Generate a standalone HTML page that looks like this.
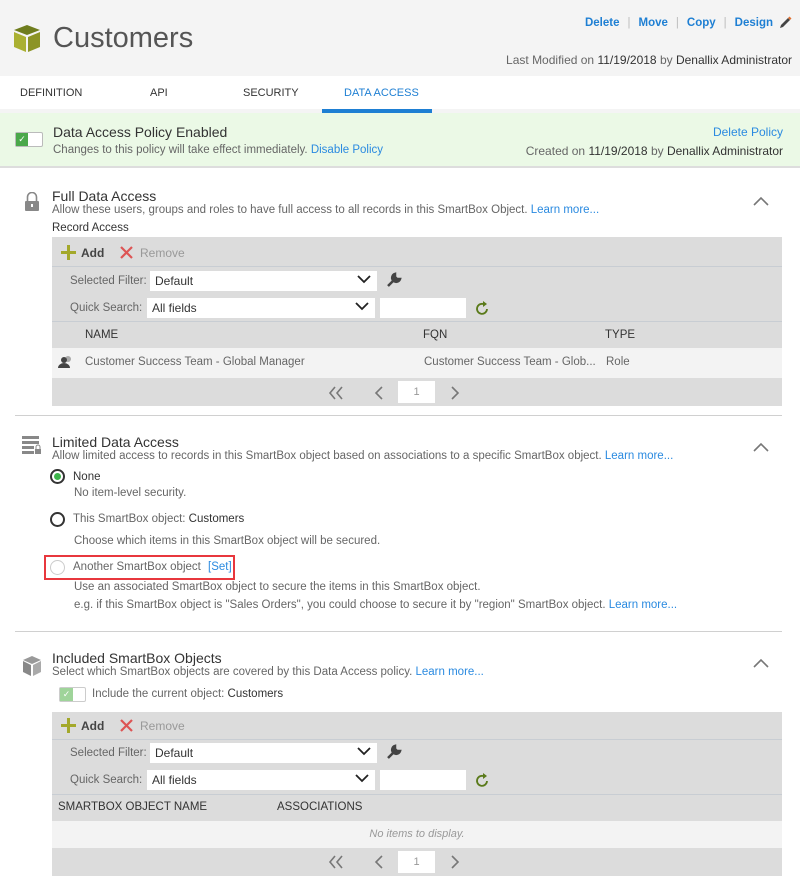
<!DOCTYPE html>
<html><head><style>
*{margin:0;padding:0;box-sizing:border-box}
body{width:800px;height:884px;background:#fff;font-family:"Liberation Sans",Arial,sans-serif;color:#333;position:relative;overflow:hidden;font-size:12px}
.a{position:absolute;white-space:nowrap}
.blue{color:#2a8ae0}
.g{color:#666}
.grid{position:absolute;left:52px;width:730px;background:#dcdcdc}
.inp{position:absolute;background:#fff;height:20px;font-size:12px;padding:3px 5px;color:#333}
.chev{position:absolute;right:6px;top:3px}
.sep{position:absolute;left:15px;width:767px;height:1px;background:#d0d0d0}
.radio{position:absolute;width:15px;height:15px;border-radius:50%;border:2px solid #333;background:#fff}
.pipe{color:#bbb;font-weight:normal;margin:0 8px}
</style></head><body>
<div class="a" style="left:0;top:0;width:800px;height:76px;background:#f4f4f4"></div>
<svg class="a" style="left:13px;top:24px" width="28" height="29" viewBox="0 0 28 29"><polygon points="14,1 27,6 14,11 1,6" fill="#6f7d1e"/><polygon points="1,8 13,13 13,28 1,23" fill="#aab032"/><polygon points="15,13 27,8 27,23 15,28" fill="#8c9426"/></svg>
<div class="a" style="left:53px;top:22px;font-size:29px;color:#555">Customers</div>
<div class="a" style="right:27px;top:17px;font-size:11.5px;font-weight:bold;color:#1e7fd3">Delete<span class="pipe">|</span>Move<span class="pipe">|</span>Copy<span class="pipe">|</span>Design</div>
<svg class="a" style="left:778px;top:16px" width="14" height="14" viewBox="0 0 14 14"><path d="M2 12 L3 9 L10 2 L12 4 L5 11 Z" fill="#444"/><path d="M10 2 L11.5 0.5 L13.5 2.5 L12 4Z" fill="#e07030"/></svg>
<div class="a g" style="right:8px;top:53px;font-size:12px">Last Modified on <span style="color:#333">11/19/2018</span> by <span style="color:#333">Denallix Administrator</span></div>
<div class="a" style="left:0;top:76px;width:800px;height:33px;background:#fff"></div>
<div class="a" style="left:0;top:109px;width:800px;height:4px;background:#f4f4f4"></div>
<div class="a" style="left:20px;top:87px;font-size:11px;color:#333">DEFINITION</div>
<div class="a" style="left:150px;top:87px;font-size:11px;color:#333">API</div>
<div class="a" style="left:243px;top:87px;font-size:11px;color:#333">SECURITY</div>
<div class="a" style="left:344px;top:87px;font-size:11px;color:#1e7fd3">DATA ACCESS</div>
<div class="a" style="left:322px;top:109px;width:110px;height:4px;background:#1e7fd3"></div>
<div class="a" style="left:0;top:113px;width:800px;height:55px;background:#ebf9e6;border-bottom:2px solid #ddd"></div>
<div class="a" style="left:15px;top:132px;width:28px;height:15px;border:1px solid #bbb;border-radius:2px;background:#fff"><div style="width:12px;height:13px;background:#4aa84a;color:#fff;font-size:9px;text-align:center;line-height:13px">✓</div></div>
<div class="a" style="left:53px;top:124px;font-size:14px;color:#333">Data Access Policy Enabled</div>
<div class="a g" style="left:53px;top:144px;font-size:11.5px">Changes to this policy will take effect immediately. <span class="blue">Disable Policy</span></div>
<div class="a blue" style="right:17px;top:125px;font-size:12px">Delete Policy</div>
<div class="a g" style="right:17px;top:144px;font-size:12px">Created on <span style="color:#333">11/19/2018</span> by <span style="color:#333">Denallix Administrator</span></div>

<!-- Full data access -->
<svg class="a" style="left:24px;top:192px" width="16" height="20" viewBox="0 0 16 20"><path d="M3.5 9 V5 a4.5 4.5 0 0 1 9 0 V9" fill="none" stroke="#888" stroke-width="1.6"/><rect x="1" y="9" width="14" height="10" rx="1" fill="#888"/><rect x="7" y="12" width="2" height="3" fill="#fff"/></svg>
<div class="a" style="left:52px;top:188px;font-size:14px">Full Data Access</div>
<div class="a g" style="left:52px;top:204px;font-size:11.5px">Allow these users, groups and roles to have full access to all records in this SmartBox Object. <span class="blue">Learn more...</span></div>
<svg class="a" style="left:753px;top:196px" width="16" height="10"><path d="M1 9 L8 2 L15 9" fill="none" stroke="#777" stroke-width="1.6"/></svg>
<div class="a" style="left:52px;top:222px;font-size:11.5px">Record Access</div>

<div class="grid" style="top:237px;height:169px">
 <div class="a" style="left:0;top:0;width:730px;height:30px;border-bottom:1px solid #c8cdd3"></div>
 <svg class="a" style="left:9px;top:8px" width="15" height="15"><rect x="6" y="0" width="3" height="15" fill="#a3a82a"/><rect x="0" y="6" width="15" height="3" fill="#a3a82a"/></svg>
 <div class="a" style="left:29px;top:9px;font-size:12px;font-weight:bold;color:#444">Add</div>
 <svg class="a" style="left:68px;top:9px" width="13" height="13"><path d="M1 1 L12 12 M12 1 L1 12" stroke="#d55" stroke-width="2.2"/></svg>
 <div class="a" style="left:88px;top:9px;font-size:12px;color:#999">Remove</div>
 <div class="a g" style="left:18px;top:38px;font-size:11.5px">Selected Filter:</div>
 <div class="inp" style="left:98px;top:34px;width:227px">Default<svg class="chev" width="14" height="10"><path d="M1 2 L7 8 L13 2" fill="none" stroke="#222" stroke-width="1.8"/></svg></div>
 <svg class="a" style="left:334px;top:35px" width="16" height="16" viewBox="0 0 16 16"><path d="M2 14 L8 8 M9 2 a4 4 0 1 0 5 5 L11 7 L9 5 Z" fill="#444" stroke="#444" stroke-width="2.5"/></svg>
 <div class="a g" style="left:18px;top:65px;font-size:11.5px">Quick Search:</div>
 <div class="inp" style="left:95px;top:61px;width:228px">All fields<svg class="chev" width="14" height="10"><path d="M1 2 L7 8 L13 2" fill="none" stroke="#222" stroke-width="1.8"/></svg></div>
 <div class="inp" style="left:328px;top:61px;width:86px"></div>
 <svg class="a" style="left:423px;top:63px" width="15" height="16" viewBox="0 0 15 16"><path d="M12 9 A5 5 0 1 1 9.5 4.5" fill="none" stroke="#5a7a1a" stroke-width="1.8"/><path d="M8 1 L12 4 L8 7Z" fill="#5a7a1a"/></svg>
 <div class="a" style="left:0;top:84px;width:730px;height:1px;background:#c8cdd3"></div>
 <div class="a" style="left:33px;top:92px;font-size:11.5px">NAME</div>
 <div class="a" style="left:371px;top:92px;font-size:11.5px">FQN</div>
 <div class="a" style="left:553px;top:92px;font-size:11.5px">TYPE</div>
 <div class="a" style="left:0;top:111px;width:730px;height:30px;background:#f3f3f3"></div>
 <svg class="a" style="left:6px;top:118px" width="16" height="14"><circle cx="10" cy="4" r="3" fill="#aaa"/><circle cx="6" cy="5" r="3" fill="#444"/><path d="M0 13 a6 5 0 0 1 12 0Z" fill="#444"/></svg>
 <div class="a g" style="left:33px;top:119px;font-size:11.5px">Customer Success Team - Global Manager</div>
 <div class="a g" style="left:372px;top:119px;font-size:11.5px">Customer Success Team - Glob...</div>
 <div class="a g" style="left:554px;top:119px;font-size:11.5px">Role</div>
 <svg class="a" style="left:276px;top:149px" width="16" height="14"><path d="M7 1 L2 7 L7 13 M14 1 L9 7 L14 13" fill="none" stroke="#777" stroke-width="1.6"/></svg>
 <svg class="a" style="left:322px;top:149px" width="10" height="14"><path d="M8 1 L2 7 L8 13" fill="none" stroke="#777" stroke-width="1.6"/></svg>
 <div class="a" style="left:346px;top:144px;width:37px;height:22px;background:#fff;color:#999;font-size:11px;text-align:center;line-height:22px">1</div>
 <svg class="a" style="left:398px;top:149px" width="10" height="14"><path d="M2 1 L8 7 L2 13" fill="none" stroke="#777" stroke-width="1.6"/></svg>
</div>
<div class="sep" style="top:415px"></div>

<!-- Limited -->
<svg class="a" style="left:22px;top:436px" width="20" height="20"><rect x="0" y="0" width="17" height="3" fill="#888"/><rect x="0" y="5" width="17" height="3" fill="#888"/><rect x="0" y="10" width="12" height="3" fill="#888"/><rect x="0" y="15" width="12" height="3" fill="#888"/><rect x="13" y="13" width="6" height="5" fill="#888"/><path d="M14 13 v-2 a2 2 0 0 1 4 0 v2" fill="none" stroke="#888"/></svg>
<div class="a" style="left:52px;top:434px;font-size:14px">Limited Data Access</div>
<div class="a g" style="left:52px;top:450px;font-size:11.5px">Allow limited access to records in this SmartBox object based on associations to a specific SmartBox object. <span class="blue">Learn more...</span></div>
<svg class="a" style="left:753px;top:442px" width="16" height="10"><path d="M1 9 L8 2 L15 9" fill="none" stroke="#777" stroke-width="1.6"/></svg>
<div class="radio" style="left:50px;top:469px"><div style="width:7px;height:7px;border-radius:50%;background:#3cb44a;margin:2px"></div></div>
<div class="a" style="left:73px;top:471px;font-size:11.5px">None</div>
<div class="a g" style="left:74px;top:487px;font-size:11.5px">No item-level security.</div>
<div class="radio" style="left:50px;top:512px"></div>
<div class="a" style="left:73px;top:513px;font-size:11.5px"><span class="g">This SmartBox object:</span> Customers</div>
<div class="a g" style="left:74px;top:535px;font-size:11.5px">Choose which items in this SmartBox object will be secured.</div>
<div class="a" style="left:44px;top:555px;width:191px;height:25px;border:2px solid #e8373d"></div>
<div class="radio" style="left:50px;top:560px;border:1px solid #ccc"></div>
<div class="a g" style="left:73px;top:561px;font-size:11.5px">Another SmartBox object <span class="blue" style="margin-left:4px">[Set]</span></div>
<div class="a g" style="left:74px;top:581px;font-size:11.5px">Use an associated SmartBox object to secure the items in this SmartBox object.</div>
<div class="a g" style="left:74px;top:599px;font-size:11.5px">e.g. if this SmartBox object is "Sales Orders", you could choose to secure it by "region" SmartBox object. <span class="blue">Learn more...</span></div>
<div class="sep" style="top:631px"></div>

<!-- Included -->
<svg class="a" style="left:22px;top:655px" width="20" height="22" viewBox="0 0 20 22"><polygon points="10,1 19,5 10,9 1,5" fill="#999"/><polygon points="1,6 9,10 9,21 1,17" fill="#888"/><polygon points="11,10 19,6 19,17 11,21" fill="#aaa"/></svg>
<div class="a" style="left:52px;top:650px;font-size:14px">Included SmartBox Objects</div>
<div class="a g" style="left:52px;top:666px;font-size:11.5px">Select which SmartBox objects are covered by this Data Access policy. <span class="blue">Learn more...</span></div>
<svg class="a" style="left:753px;top:658px" width="16" height="10"><path d="M1 9 L8 2 L15 9" fill="none" stroke="#777" stroke-width="1.6"/></svg>
<div class="a" style="left:59px;top:687px;width:27px;height:15px;border:1px solid #ccc;border-radius:2px;background:#fff"><div style="width:13px;height:13px;background:#9fd49a;color:#fff;font-size:9px;text-align:center;line-height:13px">✓</div></div>
<div class="a" style="left:92px;top:688px;font-size:11.5px"><span class="g">Include the current object:</span> Customers</div>

<div class="grid" style="top:712px;height:164px">
 <div class="a" style="left:0;top:0;width:730px;height:28px;border-bottom:1px solid #c8cdd3"></div>
 <svg class="a" style="left:9px;top:6px" width="15" height="15"><rect x="6" y="0" width="3" height="15" fill="#a3a82a"/><rect x="0" y="6" width="15" height="3" fill="#a3a82a"/></svg>
 <div class="a" style="left:29px;top:7px;font-size:12px;font-weight:bold;color:#444">Add</div>
 <svg class="a" style="left:68px;top:7px" width="13" height="13"><path d="M1 1 L12 12 M12 1 L1 12" stroke="#d55" stroke-width="2.2"/></svg>
 <div class="a" style="left:88px;top:7px;font-size:12px;color:#999">Remove</div>
 <div class="a g" style="left:18px;top:35px;font-size:11.5px">Selected Filter:</div>
 <div class="inp" style="left:98px;top:31px;width:227px">Default<svg class="chev" width="14" height="10"><path d="M1 2 L7 8 L13 2" fill="none" stroke="#222" stroke-width="1.8"/></svg></div>
 <svg class="a" style="left:334px;top:32px" width="16" height="16" viewBox="0 0 16 16"><path d="M2 14 L8 8 M9 2 a4 4 0 1 0 5 5 L11 7 L9 5 Z" fill="#444" stroke="#444" stroke-width="2.5"/></svg>
 <div class="a g" style="left:18px;top:62px;font-size:11.5px">Quick Search:</div>
 <div class="inp" style="left:95px;top:58px;width:228px">All fields<svg class="chev" width="14" height="10"><path d="M1 2 L7 8 L13 2" fill="none" stroke="#222" stroke-width="1.8"/></svg></div>
 <div class="inp" style="left:328px;top:58px;width:86px"></div>
 <svg class="a" style="left:423px;top:60px" width="15" height="16" viewBox="0 0 15 16"><path d="M12 9 A5 5 0 1 1 9.5 4.5" fill="none" stroke="#5a7a1a" stroke-width="1.8"/><path d="M8 1 L12 4 L8 7Z" fill="#5a7a1a"/></svg>
 <div class="a" style="left:0;top:82px;width:730px;height:1px;background:#c8cdd3"></div>
 <div class="a" style="left:6px;top:89px;font-size:11.5px">SMARTBOX OBJECT NAME</div>
 <div class="a" style="left:225px;top:89px;font-size:11.5px">ASSOCIATIONS</div>
 <div class="a" style="left:0;top:109px;width:730px;height:27px;background:#f3f3f3"></div>
 <div class="a" style="left:0;top:116px;width:730px;text-align:center;font-size:11px;font-style:italic;color:#999">No items to display.</div>
 <svg class="a" style="left:276px;top:143px" width="16" height="14"><path d="M7 1 L2 7 L7 13 M14 1 L9 7 L14 13" fill="none" stroke="#777" stroke-width="1.6"/></svg>
 <svg class="a" style="left:322px;top:143px" width="10" height="14"><path d="M8 1 L2 7 L8 13" fill="none" stroke="#777" stroke-width="1.6"/></svg>
 <div class="a" style="left:346px;top:139px;width:37px;height:22px;background:#fff;color:#999;font-size:11px;text-align:center;line-height:22px">1</div>
 <svg class="a" style="left:398px;top:143px" width="10" height="14"><path d="M2 1 L8 7 L2 13" fill="none" stroke="#777" stroke-width="1.6"/></svg>
</div>
</body></html>
